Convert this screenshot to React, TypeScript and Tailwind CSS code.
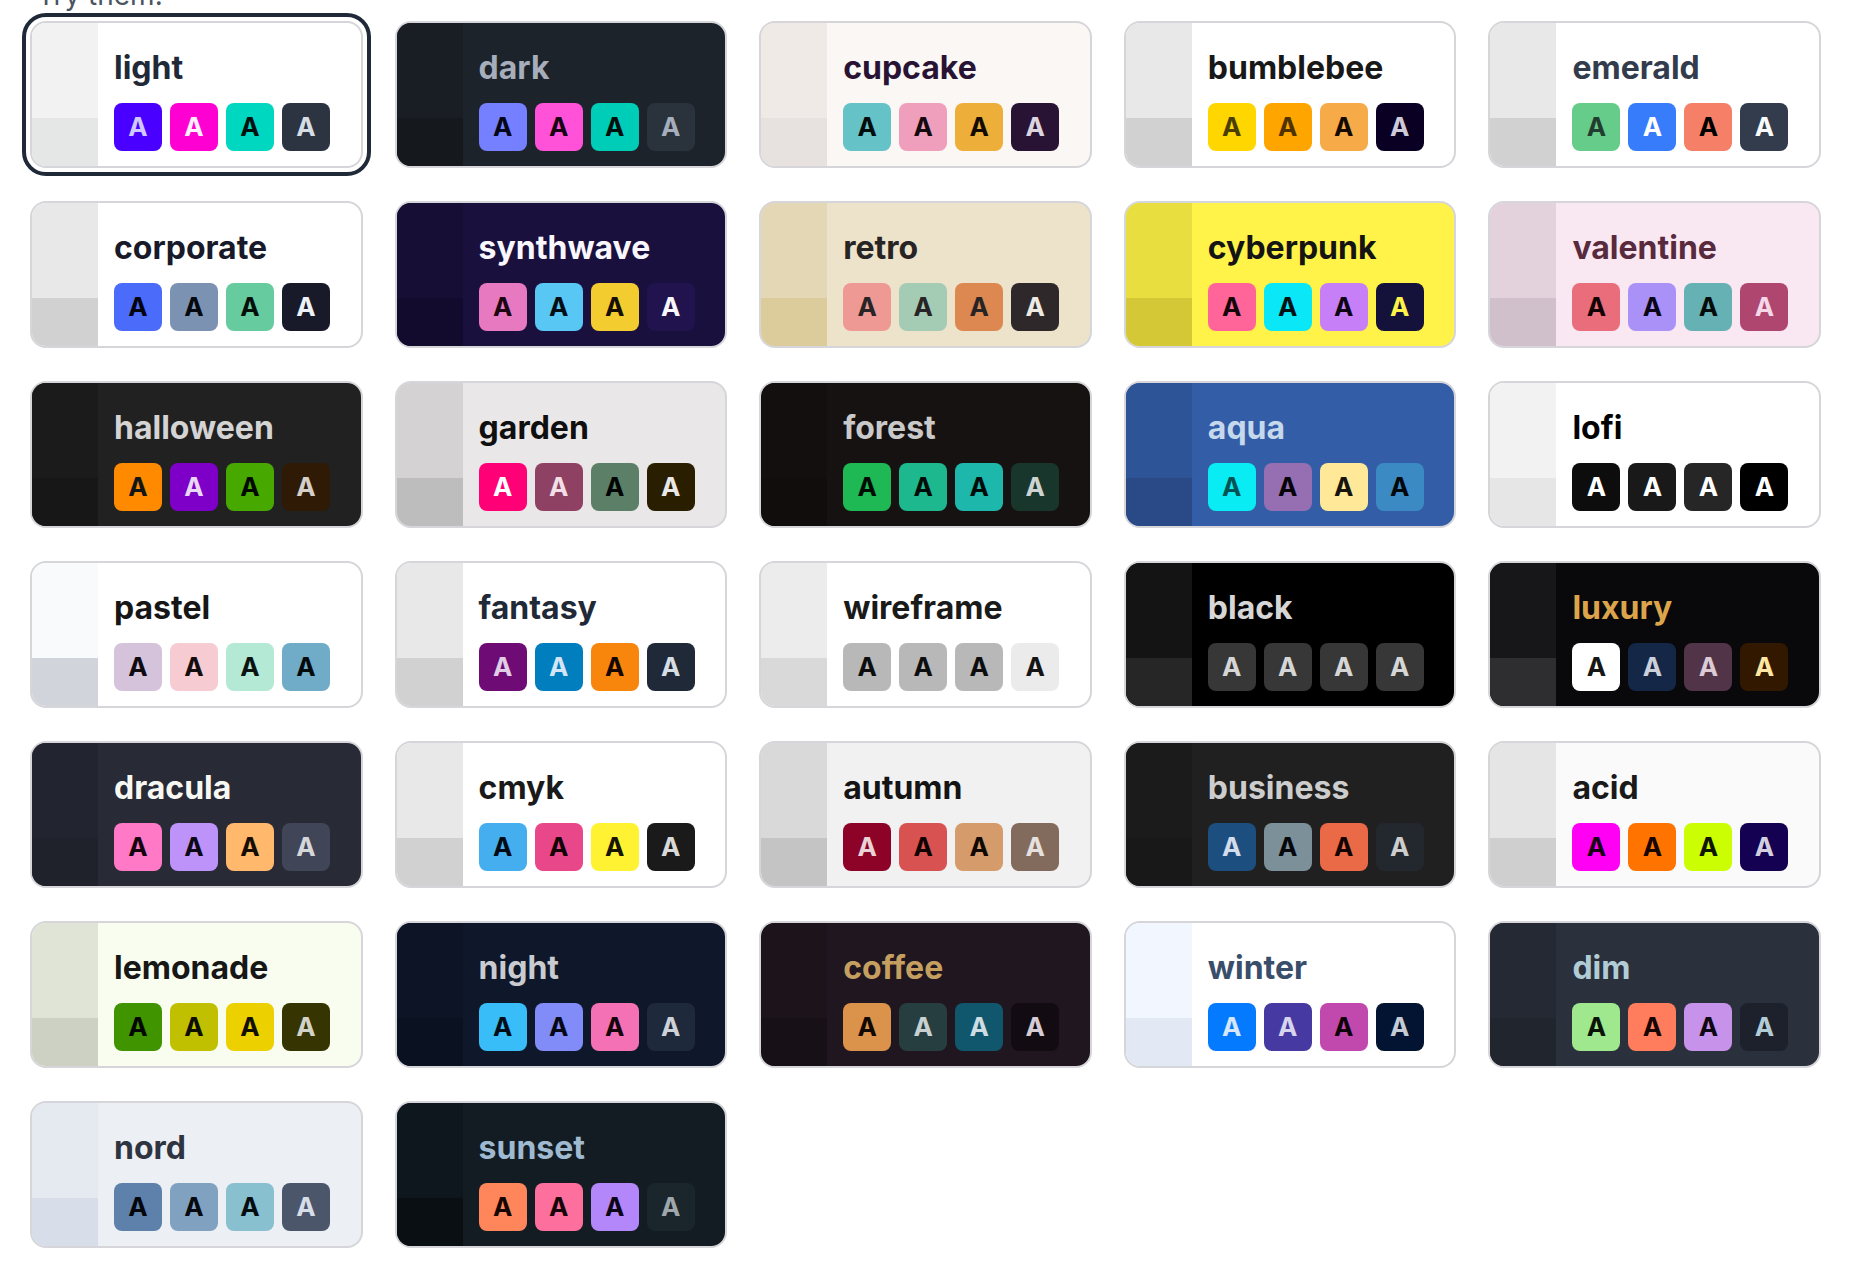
import { useState } from "react";

type Theme = {
  name: string;
  card: string; // base-100 background + base-content text
  b2: string;
  b3: string;
  swatches: [string, string, string, string]; // primary, secondary, accent, neutral
};

const THEMES: Theme[] = [
  { name: "light", card: "bg-[#ffffff] text-[#1f2937]", b2: "bg-[#f2f2f2]", b3: "bg-[#e5e6e6]",
    swatches: ["bg-[#4a00ff] text-[#d0c8ff]", "bg-[#ff00d3] text-[#fff0fb]", "bg-[#00d7c0] text-[#001110]", "bg-[#2b3440] text-[#d7dde4]"] },
  { name: "dark", card: "bg-[#1d232a] text-[#a6adbb]", b2: "bg-[#191e24]", b3: "bg-[#15191e]",
    swatches: ["bg-[#7480ff] text-[#050617]", "bg-[#ff52d9] text-[#190211]", "bg-[#00cdb7] text-[#000e0c]", "bg-[#2a323c] text-[#a6adbb]"] },
  { name: "cupcake", card: "bg-[#faf7f5] text-[#291334]", b2: "bg-[#efeae6]", b3: "bg-[#e7e2df]",
    swatches: ["bg-[#65c3c8] text-[#030c0c]", "bg-[#ef9fbc] text-[#140a0d]", "bg-[#eeaf3a] text-[#140b03]", "bg-[#291334] text-[#dcd5df]"] },
  { name: "bumblebee", card: "bg-[#ffffff] text-[#181818]", b2: "bg-[#e8e8e8]", b3: "bg-[#d1d1d1]",
    swatches: ["bg-[#ffd600] text-[#4b3f00]", "bg-[#ffa500] text-[#4f3200]", "bg-[#f7ab48] text-[#140a00]", "bg-[#0a0023] text-[#cfcad9]"] },
  { name: "emerald", card: "bg-[#ffffff] text-[#333c4d]", b2: "bg-[#e8e8e8]", b3: "bg-[#d1d1d1]",
    swatches: ["bg-[#66cc8a] text-[#223d30]", "bg-[#377cfb] text-[#ffffff]", "bg-[#f68067] text-[#000000]", "bg-[#333c4d] text-[#f9fafb]"] },

  { name: "corporate", card: "bg-[#ffffff] text-[#181a2a]", b2: "bg-[#e8e8e8]", b3: "bg-[#d1d1d1]",
    swatches: ["bg-[#4b6bfb] text-[#02030f]", "bg-[#7b92b2] text-[#05080c]", "bg-[#67cba0] text-[#040f0a]", "bg-[#181a2a] text-[#edf2f7]"] },
  { name: "synthwave", card: "bg-[#1a103d] text-[#f9f7fd]", b2: "bg-[#170e36]", b3: "bg-[#130b2e]",
    swatches: ["bg-[#e779c1] text-[#1c0411]", "bg-[#58c7f3] text-[#020e14]", "bg-[#f3cc30] text-[#140f02]", "bg-[#20134e] text-[#f9f7fd]"] },
  { name: "retro", card: "bg-[#ece3ca] text-[#282425]", b2: "bg-[#e3d7b5]", b3: "bg-[#dccb9b]",
    swatches: ["bg-[#ef9995] text-[#282425]", "bg-[#a4cbb4] text-[#282425]", "bg-[#dc8850] text-[#282425]", "bg-[#2e282a] text-[#edeae3]"] },
  { name: "cyberpunk", card: "bg-[#fff248] text-[#141414]", b2: "bg-[#e9de40]", b3: "bg-[#d4c837]",
    swatches: ["bg-[#ff6598] text-[#140509]", "bg-[#0ae8f8] text-[#001214]", "bg-[#c77ff7] text-[#0e0514]", "bg-[#14123b] text-[#fff248]"] },
  { name: "valentine", card: "bg-[#f9e7f2] text-[#582a3d]", b2: "bg-[#e3d1dc]", b3: "bg-[#cfc0cb]",
    swatches: ["bg-[#e96d7b] text-[#140305]", "bg-[#a991f7] text-[#0a0615]", "bg-[#66b1b3] text-[#030b0b]", "bg-[#af4670] text-[#f5d8e8]"] },

  { name: "halloween", card: "bg-[#212121] text-[#d4d4d4]", b2: "bg-[#1b1b1b]", b3: "bg-[#171717]",
    swatches: ["bg-[#ff8a00] text-[#131616]", "bg-[#7e00c8] text-[#e8d8f5]", "bg-[#47a800] text-[#020a00]", "bg-[#2f1b05] text-[#d4cfc8]"] },
  { name: "garden", card: "bg-[#e9e7e7] text-[#100f0f]", b2: "bg-[#d4d2d2]", b3: "bg-[#bebdbd]",
    swatches: ["bg-[#ff0077] text-[#ffffff]", "bg-[#8e4162] text-[#f3dde6]", "bg-[#5c7f67] text-[#010402]", "bg-[#291e00] text-[#e9e7e7]"] },
  { name: "forest", card: "bg-[#171212] text-[#cac9c9]", b2: "bg-[#140f0f]", b3: "bg-[#110d0d]",
    swatches: ["bg-[#1eb854] text-[#000c03]", "bg-[#1db88e] text-[#000c07]", "bg-[#1db8ab] text-[#000c0a]", "bg-[#19362d] text-[#cdd3d1]"] },
  { name: "aqua", card: "bg-[#345da7] text-[#c6d8ec]", b2: "bg-[#2e5498]", b3: "bg-[#2a4a87]",
    swatches: ["bg-[#09ecf3] text-[#005355]", "bg-[#966fb3] text-[#050307]", "bg-[#ffe999] text-[#16140c]", "bg-[#3b8ac4] text-[#02070b]"] },
  { name: "lofi", card: "bg-[#ffffff] text-[#000000]", b2: "bg-[#f2f2f2]", b3: "bg-[#e6e6e6]",
    swatches: ["bg-[#0d0d0d] text-[#ffffff]", "bg-[#1a1919] text-[#ffffff]", "bg-[#262626] text-[#ffffff]", "bg-[#000000] text-[#ffffff]"] },

  { name: "pastel", card: "bg-[#ffffff] text-[#161616]", b2: "bg-[#f9fafb]", b3: "bg-[#d1d5db]",
    swatches: ["bg-[#d5c3dc] text-[#0f0b10]", "bg-[#f6cbd1] text-[#150e0f]", "bg-[#b4e9d6] text-[#0b1410]", "bg-[#70acc7] text-[#04090c]"] },
  { name: "fantasy", card: "bg-[#ffffff] text-[#1f2937]", b2: "bg-[#e8e8e8]", b3: "bg-[#d1d1d1]",
    swatches: ["bg-[#6e0b75] text-[#e0cde6]", "bg-[#007ebd] text-[#d4e6f6]", "bg-[#f8860d] text-[#150700]", "bg-[#1f2937] text-[#d7dde4]"] },
  { name: "wireframe", card: "bg-[#ffffff] text-[#1a1a1a]", b2: "bg-[#ececec]", b3: "bg-[#d9d9d9]",
    swatches: ["bg-[#b8b8b8] text-[#0d0d0d]", "bg-[#b8b8b8] text-[#0d0d0d]", "bg-[#b8b8b8] text-[#0d0d0d]", "bg-[#ebebeb] text-[#141414]"] },
  { name: "black", card: "bg-[#000000] text-[#d6d6d6]", b2: "bg-[#141414]", b3: "bg-[#262626]",
    swatches: ["bg-[#373737] text-[#d6d6d6]", "bg-[#373737] text-[#d6d6d6]", "bg-[#373737] text-[#d6d6d6]", "bg-[#373737] text-[#d6d6d6]"] },
  { name: "luxury", card: "bg-[#09090b] text-[#dca54c]", b2: "bg-[#171618]", b3: "bg-[#2e2d2f]",
    swatches: ["bg-[#ffffff] text-[#161616]", "bg-[#152747] text-[#cbd0db]", "bg-[#513448] text-[#dccbd4]", "bg-[#331800] text-[#ffe7a3]"] },

  { name: "dracula", card: "bg-[#282a36] text-[#f8f8f2]", b2: "bg-[#22242f]", b3: "bg-[#1f212b]",
    swatches: ["bg-[#ff79c6] text-[#16050e]", "bg-[#bd93f9] text-[#0d0815]", "bg-[#ffb86c] text-[#160d04]", "bg-[#414558] text-[#d6d7db]"] },
  { name: "cmyk", card: "bg-[#ffffff] text-[#1a1a1a]", b2: "bg-[#e8e8e8]", b3: "bg-[#d1d1d1]",
    swatches: ["bg-[#45aeee] text-[#020b14]", "bg-[#e8488a] text-[#130206]", "bg-[#fff232] text-[#161402]", "bg-[#1a1a1a] text-[#d9d9d9]"] },
  { name: "autumn", card: "bg-[#f1f1f1] text-[#141414]", b2: "bg-[#d9d9d9]", b3: "bg-[#c4c4c4]",
    swatches: ["bg-[#8c0327] text-[#ead3d6]", "bg-[#d85251] text-[#110202]", "bg-[#d59b6a] text-[#100903]", "bg-[#826a5c] text-[#e6e1de]"] },
  { name: "business", card: "bg-[#202020] text-[#cdcdcd]", b2: "bg-[#1b1b1b]", b3: "bg-[#181818]",
    swatches: ["bg-[#1c4e80] text-[#d2dcea]", "bg-[#7c909a] text-[#05070a]", "bg-[#ea6947] text-[#130402]", "bg-[#23282e] text-[#cdcdcd]"] },
  { name: "acid", card: "bg-[#fafafa] text-[#1a1a1a]", b2: "bg-[#e5e5e5]", b3: "bg-[#cfcfcf]",
    swatches: ["bg-[#ff00f4] text-[#160014]", "bg-[#ff7400] text-[#160500]", "bg-[#cbfd03] text-[#0f1600]", "bg-[#140151] text-[#d2d0e0]"] },

  { name: "lemonade", card: "bg-[#f8fdef] text-[#161716]", b2: "bg-[#e0e4d6]", b3: "bg-[#cdd1c4]",
    swatches: ["bg-[#3f9400] text-[#020800]", "bg-[#c0c000] text-[#0e0e00]", "bg-[#edd000] text-[#141000]", "bg-[#363400] text-[#d3d2c8]"] },
  { name: "night", card: "bg-[#0f172a] text-[#c9cbd0]", b2: "bg-[#0c1425]", b3: "bg-[#0a1120]",
    swatches: ["bg-[#38bdf8] text-[#010d15]", "bg-[#818cf8] text-[#060715]", "bg-[#f471b5] text-[#14040c]", "bg-[#1e293b] text-[#cdd1d8]"] },
  { name: "coffee", card: "bg-[#20161f] text-[#c59f60]", b2: "bg-[#1c131b]", b3: "bg-[#171016]",
    swatches: ["bg-[#db924b] text-[#110802]", "bg-[#263e3f] text-[#c8d0d1]", "bg-[#10576d] text-[#cddde3]", "bg-[#120c12] text-[#d5ccd5]"] },
  { name: "winter", card: "bg-[#ffffff] text-[#394e6a]", b2: "bg-[#f2f7ff]", b3: "bg-[#e3e9f4]",
    swatches: ["bg-[#047aff] text-[#d6e7ff]", "bg-[#463aa2] text-[#d7d5ee]", "bg-[#c148ac] text-[#0e020b]", "bg-[#021431] text-[#c5cbd4]"] },
  { name: "dim", card: "bg-[#2a303c] text-[#b2ccd6]", b2: "bg-[#242933]", b3: "bg-[#20252e]",
    swatches: ["bg-[#9fe88d] text-[#091306]", "bg-[#ff7d5c] text-[#160503]", "bg-[#c792e9] text-[#0e0813]", "bg-[#1c212b] text-[#b2ccd6]"] },

  { name: "nord", card: "bg-[#eceff4] text-[#2e3440]", b2: "bg-[#e5e9f0]", b3: "bg-[#d8dee9]",
    swatches: ["bg-[#5e81ac] text-[#03060b]", "bg-[#81a1c1] text-[#06090d]", "bg-[#88c0d0] text-[#060d10]", "bg-[#4c566a] text-[#d8dee9]"] },
  { name: "sunset", card: "bg-[#121c22] text-[#9fb9d0]", b2: "bg-[#0e171e]", b3: "bg-[#090f13]",
    swatches: ["bg-[#ff865b] text-[#160603]", "bg-[#fd6f9c] text-[#160409]", "bg-[#b387fa] text-[#0c0515]", "bg-[#1b262c] text-[#9fa7ab]"] },
];

function ThemeCard({ theme, active, onPick }: { theme: Theme; active: boolean; onPick: () => void }) {
  return (
    <button
      onClick={onPick}
      className={`flex h-[147px] overflow-hidden rounded-2xl border-2 border-[#d6d6da] text-left ${theme.card} ${
        active ? "outline-4 outline-offset-4 outline-[#1f2937]" : ""
      }`}
    >
      <div className="flex w-[66px] shrink-0 flex-col">
        <div className={`flex-[2] ${theme.b2}`} />
        <div className={`flex-1 ${theme.b3}`} />
      </div>
      <div className="pl-4 pt-[25px]">
        <div className="text-[32px] leading-10 font-bold">{theme.name}</div>
        <div className="mt-[15px] flex gap-2">
          {theme.swatches.map((s, i) => (
            <div
              key={i}
              className={`flex size-12 items-center justify-center rounded-lg text-[26px] leading-none font-bold ${s}`}
            >
              A
            </div>
          ))}
        </div>
      </div>
    </button>
  );
}

export default function App() {
  const [current, setCurrent] = useState("light");

  return (
    <div className="min-h-screen overflow-hidden bg-white pl-[30px] font-['Inter',sans-serif]">
      <p className="-mt-[19px] ml-[7px] text-[28px] leading-[28px] text-[#4b5563]">Try them:</p>

      <div className="mt-[12px] grid w-[1791px] grid-cols-5 gap-x-[32px] gap-y-[33px]">
        {THEMES.map((t) => (
          <ThemeCard key={t.name} theme={t} active={current === t.name} onPick={() => setCurrent(t.name)} />
        ))}
      </div>
    </div>
  );
}
